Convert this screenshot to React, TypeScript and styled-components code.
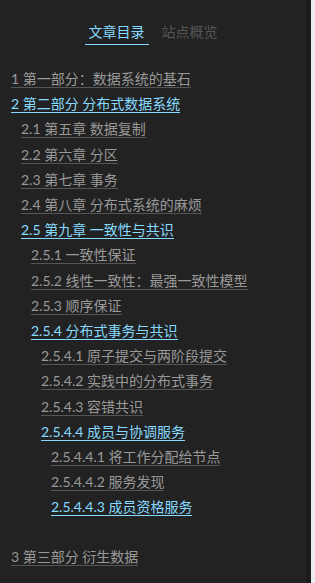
import styled, { createGlobalStyle } from 'styled-components';

const GlobalStyle = createGlobalStyle`
  html, body {
    margin: 0;
    padding: 0;
    background: #222;
  }
  body {
    font-family: Lato, 'Noto Sans CJK SC', sans-serif;
  }
`;

const activeColor = '#87daff';

interface TocItem {
  num: string;
  title: string;
  active?: boolean;
  spaced?: boolean;
  children?: TocItem[];
}

const toc: TocItem[] = [
  { num: '1', title: '第一部分：数据系统的基石' },
  {
    num: '2',
    title: '第二部分 分布式数据系统',
    active: true,
    children: [
      { num: '2.1', title: '第五章 数据复制' },
      { num: '2.2', title: '第六章 分区' },
      { num: '2.3', title: '第七章 事务' },
      { num: '2.4', title: '第八章 分布式系统的麻烦' },
      {
        num: '2.5',
        title: '第九章 一致性与共识',
        active: true,
        children: [
          { num: '2.5.1', title: '一致性保证' },
          { num: '2.5.2', title: '线性一致性：最强一致性模型' },
          { num: '2.5.3', title: '顺序保证' },
          {
            num: '2.5.4',
            title: '分布式事务与共识',
            active: true,
            children: [
              { num: '2.5.4.1', title: '原子提交与两阶段提交' },
              { num: '2.5.4.2', title: '实践中的分布式事务' },
              { num: '2.5.4.3', title: '容错共识' },
              {
                num: '2.5.4.4',
                title: '成员与协调服务',
                active: true,
                children: [
                  { num: '2.5.4.4.1', title: '将工作分配给节点' },
                  { num: '2.5.4.4.2', title: '服务发现' },
                  { num: '2.5.4.4.3', title: '成员资格服务', active: true },
                ],
              },
            ],
          },
        ],
      },
    ],
  },
  { num: '3', title: '第三部分 衍生数据', spaced: true },
];

const Page = styled.div`
  display: flex;
  height: 583px;
  overflow: hidden;
`;

const Sidebar = styled.aside`
  width: 306px;
  background: #222;
  padding-top: 20px;
  box-sizing: border-box;
`;

const ScrollTrack = styled.div`
  width: 5px;
  background: #1b1b1b;
`;

const ScrollEdge = styled.div`
  flex: 1;
  background: #ececec;
`;

const Tabs = styled.ul`
  display: flex;
  justify-content: center;
  gap: 9px;
  list-style: none;
  margin: 0;
  padding: 0;
`;

const Tab = styled.li<{ $active?: boolean }>`
  font-size: 14px;
  line-height: 24px;
  padding: 0 4px;
  color: ${(p) => (p.$active ? activeColor : '#555')};
  border-bottom: 1px solid ${(p) => (p.$active ? activeColor : 'transparent')};
  cursor: pointer;
`;

const List = styled.ol<{ $root?: boolean }>`
  list-style: none;
  margin: ${(p) => (p.$root ? '21px 0 0' : '0')};
  padding: 0 0 0 ${(p) => (p.$root ? '11px' : '10px')};
`;

const Item = styled.li<{ $spaced?: boolean }>`
  font-size: 14px;
  line-height: 25.2px;
  margin-top: ${(p) => (p.$spaced ? '24px' : '0')};
  white-space: nowrap;
`;

const Link = styled.a<{ $active?: boolean }>`
  color: ${(p) => (p.$active ? activeColor : '#999')};
  border-bottom: 1px solid ${(p) => (p.$active ? activeColor : '#555')};
  text-decoration: none;
  cursor: pointer;
`;

function TocList({ items, root }: { items: TocItem[]; root?: boolean }) {
  return (
    <List $root={root}>
      {items.map((item) => (
        <Item key={item.num} $spaced={item.spaced}>
          <Link $active={item.active}>
            {item.num} {item.title}
          </Link>
          {item.children && <TocList items={item.children} />}
        </Item>
      ))}
    </List>
  );
}

export default function App() {
  return (
    <>
      <GlobalStyle />
      <Page>
        <Sidebar>
          <Tabs>
            <Tab $active>文章目录</Tab>
            <Tab>站点概览</Tab>
          </Tabs>
          <TocList items={toc} root />
        </Sidebar>
        <ScrollTrack />
        <ScrollEdge />
      </Page>
    </>
  );
}
